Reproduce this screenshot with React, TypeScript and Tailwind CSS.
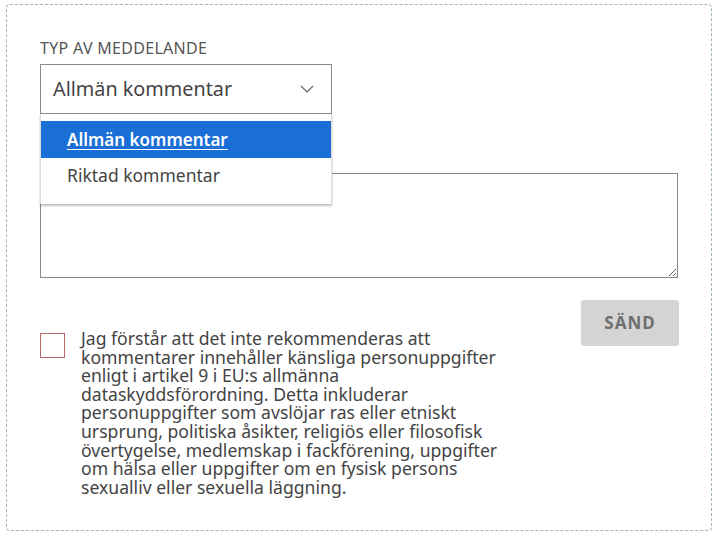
import React from 'react';

const lines = [
  'Jag förstår att det inte rekommenderas att',
  'kommentarer innehåller känsliga personuppgifter',
  'enligt i artikel 9 i EU:s allmänna',
  'dataskyddsförordning. Detta inkluderar',
  'personuppgifter som avslöjar ras eller etniskt',
  'ursprung, politiska åsikter, religiös eller filosofisk',
  'övertygelse, medlemskap i fackförening, uppgifter',
  'om hälsa eller uppgifter om en fysisk persons',
  'sexualliv eller sexuella läggning.',
];

export default function App() {
  return (
    <div className="w-[720px] h-[535px] bg-white pt-[4px] pl-[6px] font-['Noto_Sans',sans-serif]">
      <div className="w-[706px] h-[527px] border border-dashed border-[#9db3c2] rounded-[4px] pl-[33px] pr-[32px] pt-[33px]">
        <div className="relative">
          <label className="block text-[16px] leading-[20px] text-[#555] uppercase tracking-[0.3px]">
            Typ av meddelande
          </label>
          <div className="mt-[6px] w-[292px] h-[50px] border border-[#8a8a8a] flex items-center justify-between pl-[12px] pr-[17px]">
            <span className="text-[19.8px] text-[#444]">Allmän kommentar</span>
            <svg width="14" height="8" viewBox="0 0 14 8" fill="none">
              <path d="M1 1l6 6 6-6" stroke="#666" strokeWidth="1.2" />
            </svg>
          </div>

          {/* öppen lista */}
          <div className="absolute left-0 top-[76px] w-[292px] h-[90px] bg-white border-x border-[#ddd] shadow-[0_2px_2px_rgba(0,0,0,0.25)] pt-[7px] z-10">
            <div className="h-[37px] bg-[#1a6fd6] flex items-center pl-[26px]">
              <span className="text-[17px] font-semibold text-white underline underline-offset-[3px]">Allmän kommentar</span>
            </div>
            <div className="h-[35px] flex items-center pl-[26px]">
              <span className="text-[17.5px] text-[#444]">Riktad kommentar</span>
            </div>
          </div>

          <div className="h-[59px]" />
          <textarea className="block w-[638px] h-[105px] border border-[#8a8a8a] outline-none" />

          <div className="flex items-start justify-between mt-[22px]">
            <div className="flex items-start mt-[33px]">
              <div className="w-[25px] h-[25px] border border-[#b86a6a] shrink-0" />
              <div className="ml-[16px] text-[17.6px] leading-[18.6px] text-[#444] mt-[-4px]">
                {lines.map((l) => (
                  <div key={l} className="whitespace-nowrap">{l}</div>
                ))}
              </div>
            </div>
            <button className="w-[98px] h-[46px] bg-[#d4d4d4] rounded-[3px] text-[17px] font-bold text-[#6f6f6f] tracking-[1px]">
              SÄND
            </button>
          </div>
        </div>
      </div>
    </div>
  );
}
